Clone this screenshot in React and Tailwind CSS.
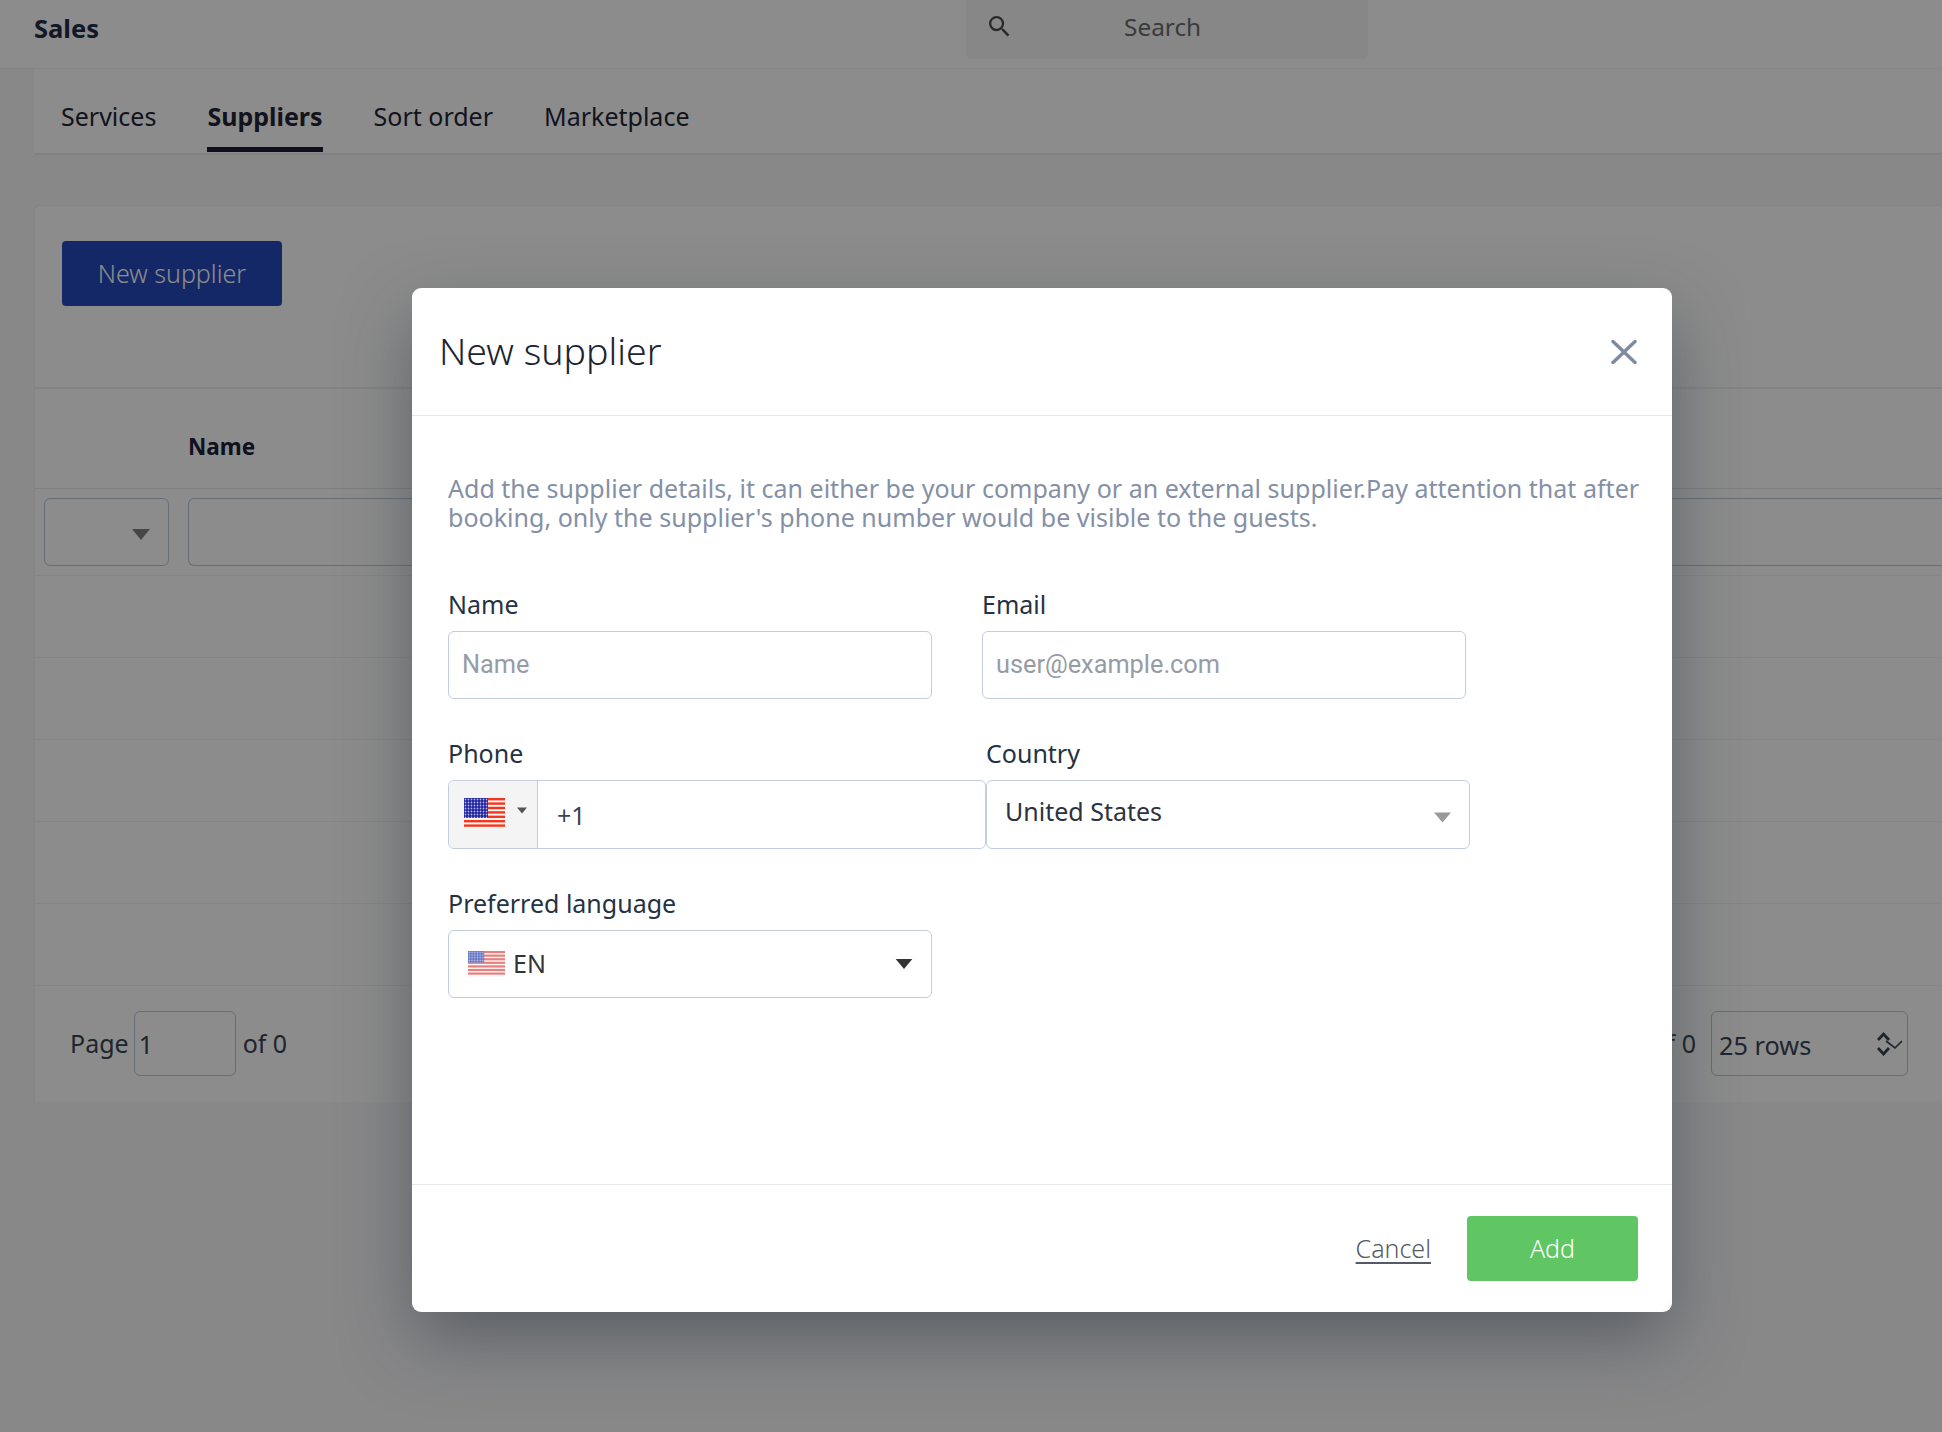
const noto = "font-['Noto_Sans',sans-serif]"

function Flag({ className, pale }) {
  const id = pale ? "dots-pale" : "dots"
  const red = pale ? "#e77f7f" : "#f4361f"
  const blue = pale ? "#6272c4" : "#1c1f9c"
  const stripes = pale ? [0, 4, 8, 12, 16, 20, 24] : [0, 4.4, 8.8, 13.2, 17.6, 22, 26.4]
  return (
    <svg viewBox="0 0 41 29" preserveAspectRatio="none" className={className}>
      <defs>
        <pattern id={id} width="3" height="3" patternUnits="userSpaceOnUse">
          <rect width="3" height="3" fill={blue} />
          <circle cx="1.5" cy="1.5" r="0.9" fill={pale ? "#c3c9ea" : "#b4b7e8"} />
        </pattern>
      </defs>
      <rect width="41" height="29" fill="#fdf6f4" />
      {stripes.map((y) => (
        <rect key={y} x="0" y={y} width="41" height="2.4" fill={red} />
      ))}
      <rect width={pale ? 18 : 24} height={pale ? 13 : 20} fill={`url(#${id})`} />
    </svg>
  )
}

function Caret({ className }) {
  return (
    <svg viewBox="0 0 10 6" className={className}>
      <path d="M0 0h10L5 6z" fill="currentColor" />
    </svg>
  )
}

function Field({ label, placeholder }) {
  return (
    <div className="w-[484px]">
      <label className="block h-[26px] text-[25px] leading-[26px] text-[#253243]">{label}</label>
      <div className="mt-[14px] flex h-[68px] items-center rounded-[6px] border border-[#c2cddd] px-[13px] font-['Roboto',sans-serif] text-[25.3px] text-[#969ca6]">
        {placeholder}
      </div>
    </div>
  )
}

function Row() {
  return <div className="h-[82px] border-b border-[#f0f0f0]" />
}

export default function App() {
  return (
    <div className={`relative h-[1432px] w-full overflow-hidden bg-[#f8f8f9] ${noto}`}>
      <header className="flex h-[69px] border-b border-[#f0f0f0] bg-white pl-[34px]">
        <span className="mt-[11px] w-[932px] text-[25.5px] font-bold leading-[34px] text-[#232c4a]">Sales</span>
        <div className="flex h-[59px] w-[402px] rounded-b-[6px] bg-[#f6f6f6] pl-[23px]">
          <svg viewBox="3 3 18 18" className="mt-[16px] h-[21px] w-[21px] text-[#4a4a4a]">
            <path
              fill="currentColor"
              d="M15.5 14h-.79l-.28-.27A6.471 6.471 0 0 0 16 9.5 6.5 6.5 0 1 0 9.5 16c1.61 0 3.09-.59 4.23-1.57l.27.28v.79l5 4.99L20.49 19l-4.99-5zm-6 0C7.01 14 5 11.99 5 9.5S7.01 5 9.5 5 14 7.01 14 9.5 11.99 14 9.5 14z"
            />
          </svg>
          <span className="ml-[114px] mt-[9px] text-[24.4px] leading-[36px] text-[#6c6c6c]">Search</span>
        </div>
      </header>

      <nav className="ml-[34px] flex h-[86px] gap-[51px] border-b-2 border-[#ececec] bg-white pl-[27px] text-[25px] text-[#1f2636]">
        <span className="mt-[29px] leading-[36px]">Services</span>
        <span className="h-[83px] border-b-[5px] border-[#1a1a33] pt-[29px] font-bold leading-[36px]">Suppliers</span>
        <span className="mt-[29px] leading-[36px]">Sort order</span>
        <span className="mt-[29px] leading-[36px]">Marketplace</span>
      </nav>

      <main className="ml-[34px] mt-[50px] rounded-t-[6px] border-l border-t border-[#f0f0f0] bg-white">
        <div className="h-[183px] border-b-2 border-[#f0f0f0] pl-[27px] pt-[35px]">
          <button className="h-[65px] w-[220px] rounded-[4px] bg-[#2649bc] text-center text-[25px] font-light text-white">
            New supplier
          </button>
        </div>
        <div className="h-[100px] border-b border-[#e6e6e6] pl-[153px] pt-[40px] text-[22.5px] font-bold leading-[36px] text-[#1c2036]">
          Name
        </div>
        <div className="flex h-[87px] gap-[19px] border-b border-[#f0f0f0] pl-[9px] pt-[9px]">
          <div className="flex h-[68px] w-[125px] items-center justify-end rounded-[6px] border border-[#bcc8da] pr-[18px] text-[#808080]">
            <Caret className="mt-[4px] h-[11px] w-[18px]" />
          </div>
          <div className="h-[68px] flex-1 rounded-l-[6px] border border-r-0 border-[#bcc8da]" />
        </div>
        <Row />
        <Row />
        <Row />
        <Row />
        <Row />
        <div className="flex h-[116px] items-center justify-between pb-[2px] pl-[35px] pr-[34px] text-[25px] text-[#3a4454]">
          <div className="flex items-center">
            <span className="pt-[2px]">Page</span>
            <div className="ml-[5px] flex h-[65px] w-[102px] items-center rounded-[6px] border border-[#bcc8da] pl-[4px] pt-[4px]">1</div>
            <span className="ml-[7px] pt-[2px]">of 0</span>
          </div>
          <div className="flex items-center">
            <span className="pt-[2px]">of 0</span>
            <div className="ml-[15px] flex h-[65px] w-[197px] items-center justify-between rounded-[6px] border border-[#bcc8da] pl-[7px] pr-[4px] text-[25.3px]">
              <span className="pt-[5px]">25 rows</span>
              <svg viewBox="0 0 28 26" className="h-[26px] w-[28px] text-[#3a4454]" fill="none" stroke="currentColor">
                <path d="M3 10l5.5-6 5.5 6M3 18l5.5 6 5.5-6" strokeWidth="2.8" />
                <path d="M11 11l9 7 7-7" strokeWidth="1.6" />
              </svg>
            </div>
          </div>
        </div>
      </main>

      <div className="absolute inset-0 bg-black/45 pl-[412px] pt-[288px]">
        <div className="flex h-[1024px] w-[1260px] flex-col rounded-[9px] bg-white shadow-[0_28px_70px_-4px_rgba(40,50,60,0.5)]">
          <div className="flex h-[128px] items-center justify-between border-b border-[#e4e7eb] pl-[27px] pr-[35px]">
            <h2 className="text-[37.5px] font-light text-[#1d2432]">New supplier</h2>
            <svg viewBox="0 0 26 24" className="h-[24px] w-[26px] text-[#7e8aa0]" fill="none" stroke="currentColor" strokeWidth="3.4" strokeLinecap="round">
              <path d="M2 1.5l22 21M24 1.5l-22 21" />
            </svg>
          </div>

          <div className="flex-1 pl-[36px] pr-[20px] pt-[58px]">
            <p className="text-[25px] leading-[29px] tracking-[0.02px] text-[#8490a6]">
              Add the supplier details, it can either be your company or an external supplier.Pay attention that after booking, only the supplier's phone number would be visible to the guests.
            </p>

            <div className="mt-[59px] flex gap-[50px]">
              <Field label="Name" placeholder="Name" />
              <Field label="Email" placeholder="user@example.com" />
            </div>

            <div className="mt-[41px] flex text-[25px]">
              <div className="w-[538px]">
                <label className="block h-[26px] leading-[26px] text-[#253243]">Phone</label>
                <div className="mt-[14px] flex h-[69px] rounded-[6px] border border-[#c2cddd] text-[#3a4454]">
                  <div className="flex w-[89px] rounded-l-[6px] border-r border-[#c2cddd] bg-[#f4f4f4] pl-[15px] pt-[17px]">
                    <Flag className="h-[29px] w-[41px]" />
                    <Caret className="ml-[12px] mt-[9px] h-[7px] w-[10px] text-[#555]" />
                  </div>
                  <span className="ml-[19px] mt-[16px] leading-[36px]">+1</span>
                </div>
              </div>
              <div className="w-[484px]">
                <label className="block h-[26px] leading-[26px] text-[#253243]">Country</label>
                <div className="mt-[14px] flex h-[69px] items-center justify-between rounded-[6px] border border-[#c2cddd] pl-[18px] pr-[18px] text-[#2c3340]">
                  <span className="-mt-[5px]">United States</span>
                  <Caret className="mt-[5px] h-[11px] w-[17px] text-[#9a9a9a]" />
                </div>
              </div>
            </div>

            <div className="mt-[41px] w-[484px] text-[25px]">
              <label className="block h-[26px] leading-[26px] text-[#253243]">Preferred language</label>
              <div className="mt-[14px] flex h-[68px] items-center rounded-[6px] border border-[#c2cddd] pl-[19px] pr-[18px] text-[#333]">
                <Flag pale className="h-[26px] w-[37px]" />
                <span className="ml-[8px] flex-1">EN</span>
                <Caret className="h-[10px] w-[18px] text-[#333]" />
              </div>
            </div>
          </div>

          <div className="flex h-[128px] items-center justify-end gap-[36px] border-t border-[#e4e7eb] pr-[34px]">
            <a className="text-[25px] font-light text-[#555b66] underline underline-offset-4">Cancel</a>
            <button className="h-[65px] w-[171px] rounded-[4px] bg-[#5fc663] text-[25px] font-light text-white">Add</button>
          </div>
        </div>
      </div>
    </div>
  )
}
